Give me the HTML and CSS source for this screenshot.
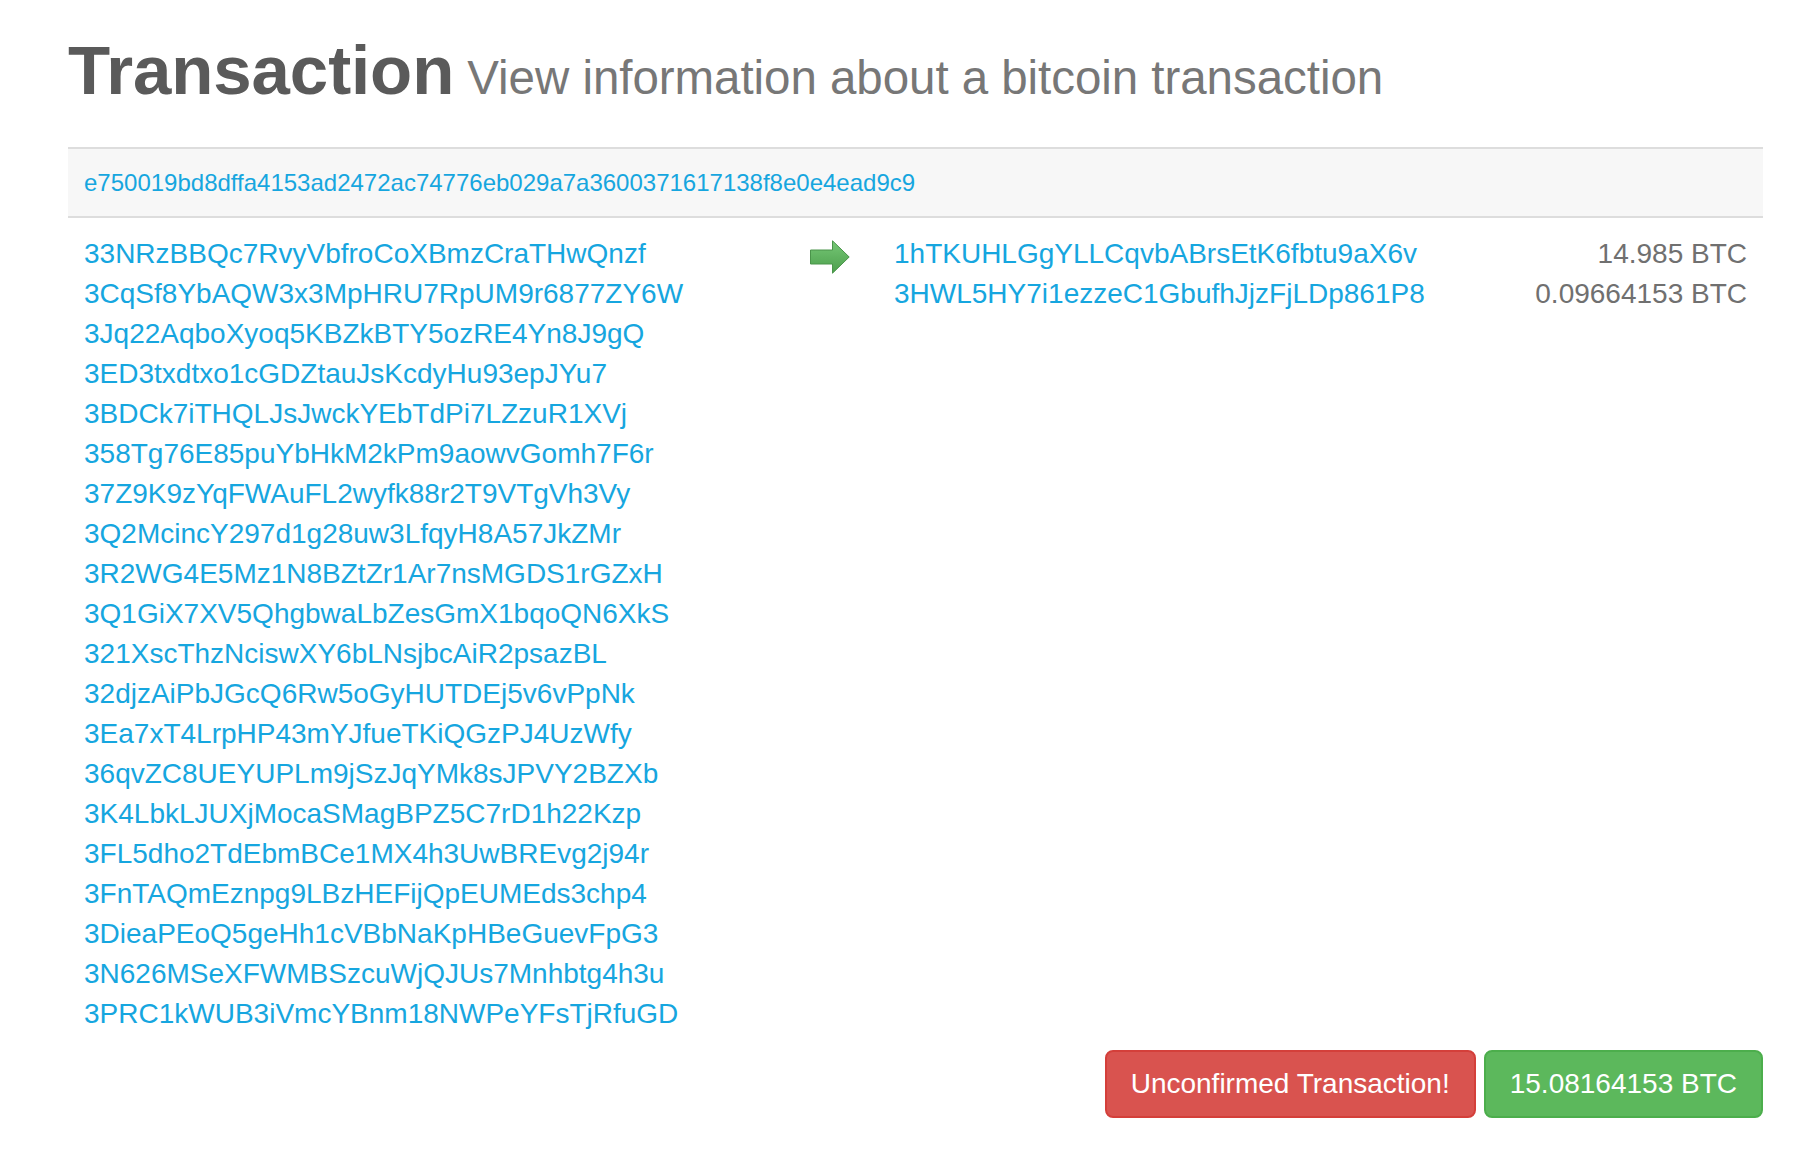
FILE: index.html
```html
<!DOCTYPE html>
<html>
<head>
<meta charset="utf-8">
<title>Transaction</title>
<link rel="stylesheet" href="styles.css">
</head>
<body>
<div class="container">
  <h1 class="page-title">Transaction<small class="subtitle"> View information about a bitcoin transaction</small></h1>

  <div class="hash-bar">
    <a class="link" href="#">e750019bd8dffa4153ad2472ac74776eb029a7a3600371617138f8e0e4ead9c9</a>
  </div>

  <div class="tx-body">
    <ul class="inputs">
      <li><a class="link" href="#">33NRzBBQc7RvyVbfroCoXBmzCraTHwQnzf</a></li>
      <li><a class="link" href="#">3CqSf8YbAQW3x3MpHRU7RpUM9r6877ZY6W</a></li>
      <li><a class="link" href="#">3Jq22AqboXyoq5KBZkBTY5ozRE4Yn8J9gQ</a></li>
      <li><a class="link" href="#">3ED3txdtxo1cGDZtauJsKcdyHu93epJYu7</a></li>
      <li><a class="link" href="#">3BDCk7iTHQLJsJwckYEbTdPi7LZzuR1XVj</a></li>
      <li><a class="link" href="#">358Tg76E85puYbHkM2kPm9aowvGomh7F6r</a></li>
      <li><a class="link" href="#">37Z9K9zYqFWAuFL2wyfk88r2T9VTgVh3Vy</a></li>
      <li><a class="link" href="#">3Q2McincY297d1g28uw3LfqyH8A57JkZMr</a></li>
      <li><a class="link" href="#">3R2WG4E5Mz1N8BZtZr1Ar7nsMGDS1rGZxH</a></li>
      <li><a class="link" href="#">3Q1GiX7XV5QhgbwaLbZesGmX1bqoQN6XkS</a></li>
      <li><a class="link" href="#">321XscThzNciswXY6bLNsjbcAiR2psazBL</a></li>
      <li><a class="link" href="#">32djzAiPbJGcQ6Rw5oGyHUTDEj5v6vPpNk</a></li>
      <li><a class="link" href="#">3Ea7xT4LrpHP43mYJfueTKiQGzPJ4UzWfy</a></li>
      <li><a class="link" href="#">36qvZC8UEYUPLm9jSzJqYMk8sJPVY2BZXb</a></li>
      <li><a class="link" href="#">3K4LbkLJUXjMocaSMagBPZ5C7rD1h22Kzp</a></li>
      <li><a class="link" href="#">3FL5dho2TdEbmBCe1MX4h3UwBREvg2j94r</a></li>
      <li><a class="link" href="#">3FnTAQmEznpg9LBzHEFijQpEUMEds3chp4</a></li>
      <li><a class="link" href="#">3DieaPEoQ5geHh1cVBbNaKpHBeGuevFpG3</a></li>
      <li><a class="link" href="#">3N626MSeXFWMBSzcuWjQJUs7Mnhbtg4h3u</a></li>
      <li><a class="link" href="#">3PRC1kWUB3iVmcYBnm18NWPeYFsTjRfuGD</a></li>
    </ul>

    <div class="arrow-cell">
      <svg class="arrow" width="40" height="34" viewBox="0 0 40 34">
        <defs>
          <linearGradient id="ag" x1="0" y1="0" x2="0" y2="1">
            <stop offset="0" stop-color="#76c776"/>
            <stop offset="1" stop-color="#4c9f4c"/>
          </linearGradient>
        </defs>
        <polygon points="0.5,10 22.5,10 22.5,0.8 39.2,17 22.5,33.2 22.5,24 0.5,24" fill="url(#ag)" stroke="#4a944a" stroke-width="1"/>
      </svg>
    </div>

    <ul class="outputs">
      <li class="out-row"><a class="link" href="#">1hTKUHLGgYLLCqvbABrsEtK6fbtu9aX6v</a><span class="amount">14.985 BTC</span></li>
      <li class="out-row"><a class="link" href="#">3HWL5HY7i1ezzeC1GbufhJjzFjLDp861P8</a><span class="amount">0.09664153 BTC</span></li>
    </ul>
  </div>

  <div class="actions">
    <button class="btn btn-danger">Unconfirmed Transaction!</button>
    <button class="btn btn-success">15.08164153 BTC</button>
  </div>
</div>
</body>
</html>
```

FILE: styles.css
```css
html, body {
  margin: 0;
  padding: 0;
  background: #ffffff;
}

body {
  font-family: "Liberation Sans", Arial, Helvetica, sans-serif;
  color: #333333;
}

.container {
  margin-left: 68px;
  width: 1695px;
}

.page-title {
  margin: 0;
  padding-top: 33px;
  font-size: 69px;
  line-height: 76px;
  font-weight: bold;
  color: #5a5a5a;
  letter-spacing: -0.1px;
  white-space: nowrap;
}

.subtitle {
  font-size: 47.5px;
  line-height: 1;
  font-weight: normal;
  color: #777777;
  letter-spacing: -0.05px;
}

.link {
  color: #16a6df;
  text-decoration: none;
}

.hash-bar {
  margin-top: 38px;
  border-top: 2px solid #dddddd;
  border-bottom: 2px solid #dddddd;
  background: #f7f7f7;
  height: 67px;
  line-height: 67px;
  padding: 0 16px;
  font-size: 24px;
}

.tx-body {
  display: grid;
  grid-template-columns: 726px 84px 1fr;
  padding: 16px 16px;
  font-size: 28px;
  line-height: 40px;
}

.inputs,
.outputs {
  list-style: none;
  margin: 0;
  padding: 0;
}

.inputs li {
  height: 40px;
  white-space: nowrap;
}

.arrow-cell {
  padding-top: 6px;
}

.arrow {
  display: block;
}

.out-row {
  display: flex;
  justify-content: space-between;
  height: 40px;
  white-space: nowrap;
}

.amount {
  color: #707070;
}

.actions {
  display: flex;
  justify-content: flex-end;
  gap: 8px;
}

.btn {
  font-family: "Liberation Sans", Arial, Helvetica, sans-serif;
  font-size: 28px;
  line-height: 40px;
  padding: 12px 24px;
  border-radius: 8px;
  border: 2px solid transparent;
  color: #ffffff;
  cursor: pointer;
}

.btn-danger {
  background: #d9534f;
  border-color: #d43f3a;
}

.btn-success {
  background: #5cb85c;
  border-color: #4cae4c;
}
```
